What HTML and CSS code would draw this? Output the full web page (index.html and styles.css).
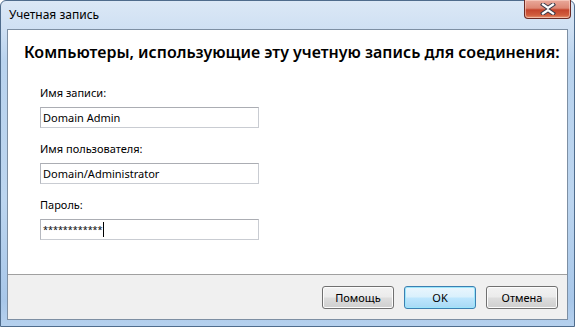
FILE: index.html
```html
<!DOCTYPE html>
<html lang="ru">
<head>
<meta charset="utf-8">
<title>Учетная запись</title>
<link rel="stylesheet" href="styles.css">
</head>
<body>
<div class="window">
  <div class="titlebar">
    <span class="title">Учетная запись</span>
    <div class="close" aria-label="Закрыть">
      <svg width="16" height="12" viewBox="0 0 16 12">
        <path d="M3 1.5 L8 5 L13 1.5 M3 10.5 L8 7 L13 10.5" fill="none" stroke="#3b3b4a" stroke-width="4.2" stroke-linecap="square"/>
        <path d="M3 1.5 L8 5 L13 1.5 M3 10.5 L8 7 L13 10.5" fill="none" stroke="#ffffff" stroke-width="2.2" stroke-linecap="square"/>
      </svg>
    </div>
  </div>
  <div class="client">
    <div class="content">
      <h1 class="heading">Компьютеры, использующие эту учетную запись для соединения:</h1>
      <div class="form">
        <label class="label">Имя записи:</label>
        <div class="field">Domain Admin</div>
        <label class="label">Имя пользователя:</label>
        <div class="field">Domain/Administrator</div>
        <label class="label">Пароль:</label>
        <div class="field password">************<span class="caret"></span></div>
      </div>
    </div>
    <div class="footer">
      <button class="btn">Помощь</button>
      <button class="btn default">OK</button>
      <button class="btn">Отмена</button>
    </div>
  </div>
</div>
</body>
</html>
```
FILE: styles.css
```css
html, body {
  margin: 0;
  padding: 0;
  width: 575px;
  height: 327px;
  overflow: hidden;
  background: #ffffff;
}

.window {
  width: 575px;
  height: 327px;
  box-sizing: border-box;
  border: 1px solid #4f6c8c;
  border-radius: 6px 6px 0 0;
  background: linear-gradient(180deg, #dbe8f6 0px, #cfe0f3 28px, #b9d3ee 60px, #bcd5ef 200px, #a8c7e9 300px, #b6d1ee 326px);
  display: flex;
  flex-direction: column;
  font-family: "Noto Sans", "Open Sans", sans-serif;
  color: #000;
}

.titlebar {
  height: 28px;
  display: flex;
  align-items: flex-start;
  justify-content: space-between;
  flex-shrink: 0;
}

.title {
  font-size: 12px;
  padding: 7px 0 0 8px;
  line-height: 14px;
}

.close {
  width: 47px;
  height: 19px;
  margin-right: 3px;
  margin-top: -1px;
  box-sizing: border-box;
  border: 1px solid #6b2a24;
  border-top: none;
  border-radius: 0 0 4px 4px;
  background: linear-gradient(180deg, #e9a99b 0%, #dd8774 45%, #c4442c 55%, #d15e3e 85%, #e79a75 100%);
  box-shadow: inset 0 0 0 1px rgba(255, 220, 210, 0.55);
  display: flex;
  align-items: center;
  justify-content: center;
}

.client {
  flex: 1;
  margin: 0 6px 6px 6px;
  border: 1px solid #7d8fa3;
  background: #f0f0f0;
  display: flex;
  flex-direction: column;
}

.content {
  flex: 1;
  background: #ffffff;
  border-bottom: 1px solid #a0a0a0;
  padding: 12px 0 0 16px;
}

.heading {
  margin: 0;
  font-size: 16px;
  font-weight: 600;
  line-height: 20px;
  letter-spacing: 0;
  white-space: nowrap;
}

.form {
  padding: 24px 0 0 16px;
  display: flex;
  flex-direction: column;
  width: 219px;
}

.label {
  font-size: 11px;
  line-height: 14px;
  height: 14px;
  margin-bottom: 7px;
}

.field {
  height: 21px;
  box-sizing: border-box;
  border: 1px solid #abadb3;
  border-color: #abadb3 #c9ccd2 #c9ccd2 #b5b8bf;
  font-size: 11px;
  line-height: 19px;
  padding-left: 2px;
  margin-bottom: 14px;
  white-space: nowrap;
  display: flex;
  align-items: center;
}

.password {
  font-size: 9px;
  letter-spacing: 0;
}

.caret {
  display: inline-block;
  width: 1px;
  height: 15px;
  background: #000;
  margin-left: 0;
}

.footer {
  height: 44px;
  flex-shrink: 0;
  display: flex;
  align-items: center;
  justify-content: flex-end;
  gap: 10px;
  padding-right: 9px;
  padding-top: 1px;
  box-sizing: border-box;
}

.btn {
  width: 72px;
  height: 23px;
  box-sizing: border-box;
  border: 1px solid #707070;
  border-radius: 3px;
  background: linear-gradient(180deg, #f2f2f2 0%, #ebebeb 48%, #dddddd 52%, #cfcfcf 100%);
  box-shadow: inset 0 0 0 1px #fcfcfc;
  font-family: "Noto Sans", "Open Sans", sans-serif;
  font-size: 11px;
  color: #000;
  padding: 0;
}

.btn.default {
  border-color: #3c7fb1;
  background: linear-gradient(180deg, #eaf6fd 0%, #d9f0fc 48%, #bee6fd 52%, #a7d9f5 100%);
  box-shadow: inset 0 0 0 1px #9ce6fb;
}
```
